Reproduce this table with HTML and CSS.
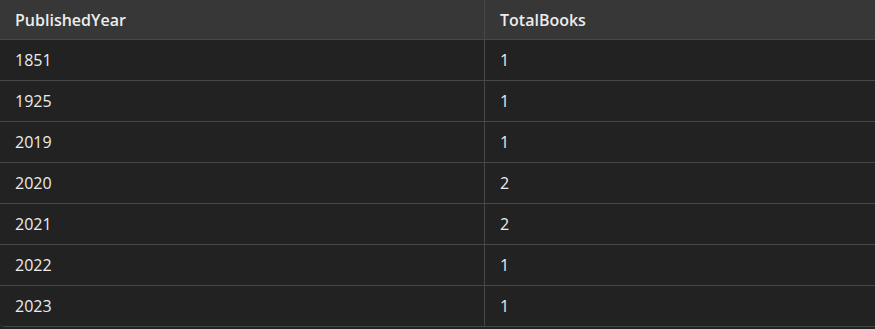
FILE: index.html
```html
<!DOCTYPE html>
<html lang="en">
<head>
<meta charset="utf-8">
<title>Query results</title>
<link rel="stylesheet" href="styles.css">
</head>
<body>
<div class="grid">
  <div class="row head">
    <div class="cell">PublishedYear</div>
    <div class="cell">TotalBooks</div>
  </div>
  <div class="row"><div class="cell">1851</div><div class="cell">1</div></div>
  <div class="row"><div class="cell">1925</div><div class="cell">1</div></div>
  <div class="row"><div class="cell">2019</div><div class="cell">1</div></div>
  <div class="row"><div class="cell">2020</div><div class="cell">2</div></div>
  <div class="row"><div class="cell">2021</div><div class="cell">2</div></div>
  <div class="row"><div class="cell">2022</div><div class="cell">1</div></div>
  <div class="row"><div class="cell">2023</div><div class="cell">1</div></div>
</div>
</body>
</html>
```

FILE: styles.css
```css
html, body {
  margin: 0;
  padding: 0;
  background: #222222;
}
body {
  width: 875px;
  height: 329px;
  overflow: hidden;
  font-family: "Open Sans", "Noto Sans", sans-serif;
  font-size: 16px;
  color: #ececec;
}
.grid {
  border-bottom: 1px solid #474747;
  border-bottom-left-radius: 5px;
  overflow: hidden;
}
.row {
  display: grid;
  grid-template-columns: 484px 1fr;
  height: 40px;
  border-top: 1px solid #474747;
  background: #222222;
}
.row.head {
  height: 39px;
  border-top: none;
  background: #373737;
  font-weight: 600;
}
.cell {
  display: flex;
  align-items: center;
  padding-left: 15px;
}
.cell + .cell {
  border-left: 1px solid #474747;
}
```
